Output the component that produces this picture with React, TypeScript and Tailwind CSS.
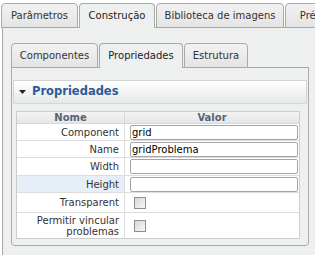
import React from 'react';

const outerTabs = [
  { label: 'Parâmetros', width: 'w-[77px]', active: false },
  { label: 'Construção', width: 'w-[76px]', active: true },
  { label: 'Biblioteca de imagens', width: 'w-[128px]', active: false },
  { label: 'Pré-visualização', width: 'w-[110px]', active: false },
];

const innerTabs = [
  { label: 'Componentes', width: 'w-[87px]', active: false },
  { label: 'Propriedades', width: 'w-[84px]', active: true },
  { label: 'Estrutura', width: 'w-[64px]', active: false },
];

function Tab({ label, width, active }: { label: string; width: string; active: boolean }) {
  return (
    <div
      className={`${width} h-[25px] shrink-0 flex items-center justify-center whitespace-nowrap rounded-t-[4px] border border-[#a9a9a9] ${
        active ? 'border-b-0 bg-[#eef0f0] text-[#222]' : 'bg-gradient-to-b from-[#f2f2f2] to-[#e4e4e4] text-[#333]'
      }`}
    >
      <span className="pb-[1px]">{label}</span>
    </div>
  );
}

function Checkbox() {
  return <div className="w-[12px] h-[12px] border border-[#8f8f8f] bg-gradient-to-br from-[#d8d8d8] to-[#f8f8f8]" />;
}

function TextInput({ value }: { value: string }) {
  return (
    <div className="w-[168px] h-[15px] flex items-center border border-[#a5a5a5] rounded-[2px] bg-white pl-[1px] text-black">
      {value}
    </div>
  );
}

export default function App() {
  const rows = [
    { label: 'Component', value: <TextInput value="grid" />, h: 'h-[17px]' },
    { label: 'Name', value: <TextInput value="gridProblema" />, h: 'h-[17px]' },
    { label: 'Width', value: <TextInput value="" />, h: 'h-[18px]' },
    { label: 'Height', value: <TextInput value="" />, h: 'h-[17px]', hl: true },
    { label: 'Transparent', value: <div className="pl-[4px]"><Checkbox /></div>, h: 'h-[20px]' },
    {
      label: (
        <>
          Permitir vincular
          <br />
          problemas
        </>
      ),
      value: <div className="pl-[4px]"><Checkbox /></div>,
      h: 'h-[25px]',
    },
  ];

  return (
    <div className="w-[315px] h-[255px] overflow-hidden bg-white font-['DejaVu_Sans',sans-serif] text-[10px] text-[#333]">
      {/* outer tabs */}
      <div className="relative z-10 flex gap-[1px] pl-[1px] pt-[3px]">
        {outerTabs.map((t) => (
          <Tab key={t.label} {...t} />
        ))}
      </div>

      <div className="ml-[2px] -mt-[1px] w-[400px] h-[240px] border-l border-t border-[#a9a9a9] bg-[#eef0f0] pl-[8px] pt-[15px]">
        {/* inner tabs */}
        <div className="relative z-10 flex gap-[1px]">
          {innerTabs.map((t) => (
            <Tab key={t.label} {...t} />
          ))}
        </div>

        <div className="-mt-[1px] w-[298px] h-[179px] border border-[#a9a9a9] rounded-b-[4px] bg-[#eef0f0] pt-[12px] px-[1px]">
          {/* section header */}
          <div className="h-[24px] flex items-center gap-[6px] border border-[#d4d6d6] bg-gradient-to-b from-white to-[#e6e8e8] pl-[5px]">
            <svg width="7" height="4" viewBox="0 0 7 4">
              <polygon points="0,0 7,0 3.5,4" fill="#222" />
            </svg>
            <span className="text-[11.5px] font-bold text-[#2d5b9b]">Propriedades</span>
          </div>

          {/* property grid */}
          <div className="mt-[7px] ml-[3px] w-[284px] border border-[#cdcdcd] bg-white">
            <div className="flex h-[12px] border-b border-[#d8d8d8] bg-gradient-to-b from-[#f4f4f4] to-[#e6e6e6] font-bold text-[#566474]">
              <div className="w-[108px] border-r border-[#d8d8d8] flex items-center justify-center leading-none">Nome</div>
              <div className="flex-1 flex items-center justify-center leading-none">Valor</div>
            </div>
            {rows.map((r, i) => (
              <div key={i} className={`flex ${r.h} border-b border-[#dcdcdc] last:border-b-0`}>
                <div
                  className={`w-[108px] border-r border-[#dcdcdc] flex items-center justify-end pr-[5px] text-right leading-[11px] ${
                    r.hl ? 'bg-[#e6eef8]' : ''
                  }`}
                >
                  <span>{r.label}</span>
                </div>
                <div className="flex-1 flex items-center pl-[5px]">{r.value}</div>
              </div>
            ))}
          </div>
        </div>
      </div>
    </div>
  );
}
